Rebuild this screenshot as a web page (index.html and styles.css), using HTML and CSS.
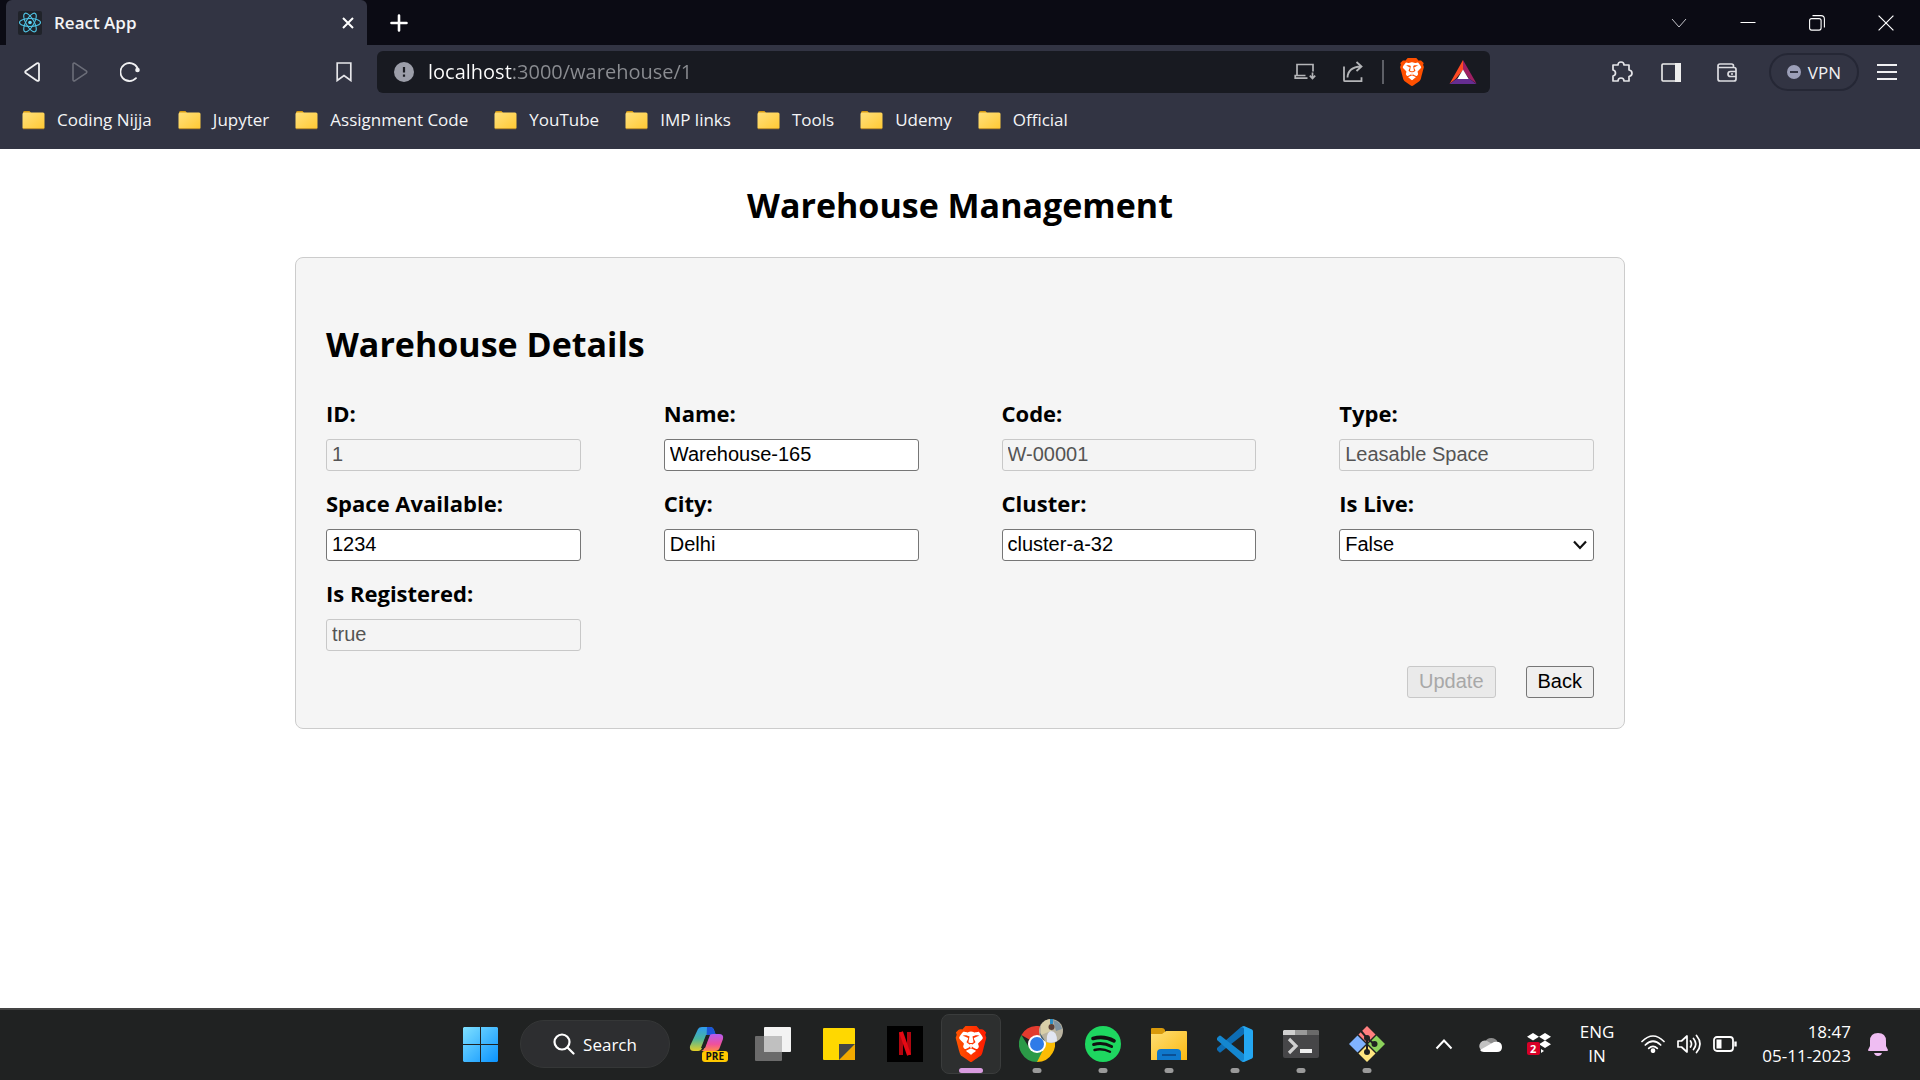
FILE: index.html
```html
<!DOCTYPE html>
<html lang="en">
<head>
<meta charset="utf-8">
<title>React App</title>
<link rel="stylesheet" href="styles.css">
</head>
<body>
<svg class="defs" aria-hidden="true">
  <defs>
    <linearGradient id="g-folder" x1="0" y1="0" x2="1" y2="1"><stop offset="0" stop-color="#ffe07c"/><stop offset="1" stop-color="#ffc933"/></linearGradient>
    <linearGradient id="g-brave" x1="0" x2="1"><stop offset="0" stop-color="#ff5500"/><stop offset="1" stop-color="#ff1a00"/></linearGradient>
    <linearGradient id="g-win" x1="0" y1="0" x2="1" y2="1"><stop offset="0" stop-color="#7fe0ff"/><stop offset="1" stop-color="#0a93ff"/></linearGradient>
    <linearGradient id="g-coA" x1="0" y1="0" x2="0" y2="1"><stop offset="0" stop-color="#2e9bf0"/><stop offset=".5" stop-color="#4bb59b"/><stop offset="1" stop-color="#e3cf26"/></linearGradient>
    <linearGradient id="g-coB" x1="0" y1="0" x2="0" y2="1"><stop offset="0" stop-color="#b45cf0"/><stop offset=".6" stop-color="#f0509c"/><stop offset="1" stop-color="#ff8a4c"/></linearGradient>
    <linearGradient id="g-exp" x1="0" y1="0" x2="1" y2="1"><stop offset="0" stop-color="#ffdf75"/><stop offset="1" stop-color="#fbb911"/></linearGradient>
    <symbol id="folder" viewBox="0 0 23 20">
      <path d="M1 2.500q0-1.500 1.500-1.500h5l2 2.500H1z" fill="#d89b13"/>
      <rect x=".5" y="2.500" width="22" height="16.500" rx="1.500" fill="url(#g-folder)"/>
      <path d="M1 18.700h21" stroke="#b98a2a" stroke-width="1"/>
    </symbol>
    <symbol id="lion" viewBox="0 0 24 24">
      <path d="M12 3.200 18.500 3l2 5-3 8-5.500 4-5.500-4-3-8 2-5z" fill="#fff"/>
      <path d="M15.680 0l2.096 2.380s1.840-.512 2.709.358c.868.870 1.584 1.638 1.584 1.638l-.562 1.381.715 2.047s-2.104 7.980-2.350 8.955c-.486 1.919-.818 2.660-2.198 3.633-1.380.972-3.884 2.660-4.293 2.916-.409.256-.920.692-1.380.692-.460 0-.970-.436-1.380-.692a185.796 185.796 0 01-4.293-2.916c-1.380-.973-1.712-1.714-2.197-3.633-.247-.975-2.351-8.955-2.351-8.955l.715-2.047-.562-1.381s.716-.768 1.585-1.638c.868-.870 2.708-.358 2.708-.358L8.321 0h7.360zm-3.679 14.936c-.140 0-1.038.317-1.758.690-.720.373-1.242.637-1.409.742-.167.104-.065.301.087.409.152.107 2.194 1.690 2.393 1.866.198.175.489.464.687.464.198 0 .490-.290.688-.464.198-.175 2.240-1.759 2.392-1.866.152-.108.254-.305.087-.410-.167-.104-.689-.368-1.410-.741-.720-.373-1.617-.690-1.757-.690zm0-11.278s-.409.001-1.022.206-1.278.460-1.584.460c-.307 0-2.581-.434-2.581-.434S4.119 7.152 4.119 7.849c0 .697.339.881.680 1.243l2.020 2.149c.192.203.590.511.356 1.066-.235.555-.580 1.260-.196 1.977.384.716 1.042 1.194 1.464 1.115.421-.080 1.412-.598 1.776-.834.364-.237 1.518-1.190 1.518-1.554 0-.365-1.193-1.020-1.413-1.168-.220-.150-1.226-.725-1.247-.950-.020-.227-.012-.293.284-.851.297-.559.831-1.304.742-1.800-.089-.495-.950-.753-1.565-.986-.615-.232-1.799-.671-1.947-.740-.148-.068-.110-.133.339-.175.448-.043 1.719-.212 2.292-.052.573.160 1.552.403 1.632.532.079.130.149.134.067.579-.081.445-.500 2.581-.541 2.960-.040.380-.120.630.288.724.409.094 1.097.256 1.333.256s.924-.162 1.333-.256c.408-.093.329-.344.288-.723-.040-.380-.460-2.516-.541-2.961-.082-.445-.012-.450.067-.579.080-.129 1.059-.372 1.632-.532.573-.160 1.845.009 2.292.052.449.042.487.107.339.175-.148.069-1.332.508-1.947.740-.615.233-1.476.490-1.565.986-.090.496.445 1.241.742 1.800.297.558.304.624.284.850-.020.226-1.026.802-1.247.950-.220.150-1.413.804-1.413 1.169 0 .364 1.154 1.317 1.518 1.554.364.236 1.355.755 1.776.834.422.079 1.080-.400 1.464-1.115.384-.716.039-1.422-.195-1.977-.235-.555.163-.863.355-1.066l2.020-2.149c.341-.362.680-.546.680-1.243 0-.697-2.695-3.960-2.695-3.960s-2.274.436-2.580.436c-.307 0-.972-.256-1.585-.461-.613-.205-1.022-.206-1.022-.206z"/>
      <path d="M12 14.500v-2.500" stroke="#fff" stroke-width="1.200"/>
    </symbol>
  </defs>
</svg>

<header class="browser">
  <div class="tabs">
    <div class="tab">
      <svg class="favicon" viewBox="0 0 24 24" fill="none" stroke="#4fc3e4" stroke-width="1.100"><rect width="24" height="24" rx="2" fill="#20232a" stroke="none"/><ellipse cx="12" cy="11.500" rx="10.500" ry="4"/><ellipse cx="12" cy="11.500" rx="10.500" ry="4" transform="rotate(60 12 11.500)"/><ellipse cx="12" cy="11.500" rx="10.500" ry="4" transform="rotate(120 12 11.500)"/><circle cx="12" cy="11.500" r="1.800" fill="#61dafb" stroke="none"/></svg>
      <span class="tab-title">React App</span>
      <button class="icon-btn" aria-label="Close tab"><svg width="12" height="12" viewBox="0 0 12 12" stroke="#fff" stroke-width="2"><path d="M1 1l10 10M11 1L1 11"/></svg></button>
    </div>
    <button class="icon-btn new-tab" aria-label="New tab"><svg width="18" height="18" viewBox="0 0 18 18" stroke="#fff" stroke-width="2.600" stroke-linecap="round"><path d="M9 1.500v15M1.500 9h15"/></svg></button>
    <div class="window-controls">
      <button class="icon-btn" aria-label="Search tabs"><svg width="16" height="16" viewBox="0 0 16 16" fill="none" stroke="#c4c4ca"><path d="M1 4l7 8 7-8"/></svg></button>
      <button class="icon-btn" aria-label="Minimize"><svg width="16" height="16" viewBox="0 0 16 16" stroke="#fff"><path d="M.5 7.500h15"/></svg></button>
      <button class="icon-btn" aria-label="Restore"><svg width="16" height="16" viewBox="0 0 16 16" fill="none" stroke="#fff" stroke-width="1.100"><rect x=".6" y="3.600" width="11.500" height="11.500" rx="2"/><path d="M3.500.6h8.500q3.400 0 3.400 3.400v8.500"/></svg></button>
      <button class="icon-btn" aria-label="Close"><svg width="16" height="16" viewBox="0 0 16 16" stroke="#fff" stroke-width="1.200"><path d="M.6.6l14.800 14.800M15.400.6L.6 15.400"/></svg></button>
    </div>
  </div>

  <div class="toolbar">
    <div class="nav">
      <button class="icon-btn" aria-label="Back"><svg width="16" height="20" viewBox="0 0 16 20" fill="none" stroke="#f0f0f2" stroke-width="1.800" stroke-linejoin="round"><path d="M13 1.300 1.800 8.900q-1.200 1.100 0 2.200L13 18.700q2 .6 2-1V2.300q0-1.600-2-1z"/></svg></button>
      <button class="icon-btn" aria-label="Forward"><svg width="16" height="20" viewBox="0 0 16 20" fill="none" stroke="#6b6d78" stroke-width="1.600" stroke-linejoin="round"><path d="M3 1.300 14.200 8.900q1.200 1.100 0 2.200L3 18.700q-2 .6-2-1V2.300q0-1.600 2-1z"/></svg></button>
      <button class="icon-btn" aria-label="Reload"><svg width="20" height="20" viewBox="1 0 20 20" fill="none" stroke="#f0f0f2" stroke-width="1.800" stroke-linecap="round"><path d="M18.500 6A9 9 0 1 0 17 16.200"/><circle cx="18.500" cy="8" r="2.300" fill="#f0f0f2" stroke="none"/></svg></button>
      <button class="icon-btn mark" aria-label="Bookmark"><svg width="16" height="20" viewBox="0 0 16 20" fill="none" stroke="#e6e6ea" stroke-width="1.700"><path d="M1.200 1h13.600v17.500L8 13.500l-6.800 5z"/></svg></button>
    </div>
    <form class="address">
      <svg width="20" height="20" viewBox="0 0 20 20"><circle cx="10" cy="10" r="10" fill="#9c9ea9"/><path d="M10 5v5.500M10 12.500v2.200" stroke="#1a1c22" stroke-width="2.200"/></svg>
      <input class="url" type="text" aria-label="Address" value="localhost:3000/warehouse/1">
      <button type="button" class="icon-btn" aria-label="Install app"><svg width="22" height="18" viewBox="0 0 22 18" fill="none" stroke="#b4b5b8" stroke-width="1.700"><path d="M19 8.500V1.500H3v11M11.500 12.500H1.200v2.700h12.300M18.500 9.500v6M15.800 12.700l2.700 2.900 2.700-2.900"/></svg></button>
      <button type="button" class="icon-btn share" aria-label="Share"><svg width="22" height="22" viewBox="0 0 22 22" fill="none" stroke="#b4b5b8" stroke-width="1.800"><path d="M2 5.500v13.700q0 1 1 1h16.500v-4M5.500 16.500q.5-10.500 13.500-11M14.500 1l5 4.500-5 4.500"/></svg></button>
      <span class="divider"></span>
      <button type="button" class="icon-btn" aria-label="Brave Shields"><svg width="28" height="28" fill="#ff5000"><use href="#lion"/></svg></button>
      <button type="button" class="icon-btn bat" aria-label="Brave Rewards"><svg width="28" height="24" viewBox="0 0 28 24"><path d="M14 0v10L7 18.500.5 24z" fill="#ff4a24"/><path d="M14 0v10l6 8.500 7.500 5z" fill="#9e1f63"/><path d="M.5 24 8 18.500h12l7.500 5.500z" fill="#662d91"/><path d="M14 9.500l5.700 9.500H8.300z" fill="#fff"/></svg></button>
    </form>
    <div class="tools">
      <button class="icon-btn" aria-label="Extensions"><svg width="22" height="22" viewBox="0 0 22 22" fill="none" stroke="#e4e4e8" stroke-width="1.700" stroke-linejoin="round"><path d="M2 4h5q0-3 3-3t3 3h5v5q3 .5 3 3.200T18 15.500V20h-5q0-3-3-3t-3 3H2v-5q2.500-.5 2.500-3T2 9z"/></svg></button>
      <button class="icon-btn" aria-label="Sidebar"><svg width="20" height="19" viewBox="0 0 20 19"><rect x="1" y="1" width="18" height="17" rx="1" fill="none" stroke="#eee" stroke-width="1.600"/><path d="M14 0h6v19h-6z" fill="#eee"/></svg></button>
      <button class="icon-btn wallet" aria-label="Wallet"><svg width="20" height="19" viewBox="0 0 20 19" fill="none" stroke="#dddde2" stroke-width="1.700"><path d="M1 4.500V16q0 2 2 2h14q2 0 2-2V6.500q0-2-2-2H1.500M1 5V3q0-2 2-2h11.500q2 0 2 2v1M19 8.500h-5.500q-2.500 0-2.500 2.500t2.500 2.500H19M14 11h2"/></svg></button>
      <button class="vpn"><svg width="14" height="14" viewBox="0 0 14 14"><circle cx="7" cy="7" r="7" fill="#9c9fb8"/><path d="M3 7h8" stroke="#323443" stroke-width="2"/></svg>VPN</button>
      <button class="icon-btn" aria-label="Menu"><svg width="20" height="16" viewBox="0 0 20 16" stroke="#f0f0f2" stroke-width="2"><path d="M0 1h20M0 8h20M0 15h20"/></svg></button>
    </div>
  </div>

  <nav class="bookmarks" aria-label="Bookmarks">
    <a href="#"><svg width="23" height="20"><use href="#folder"/></svg>Coding Nijja</a>
    <a href="#"><svg width="23" height="20"><use href="#folder"/></svg>Jupyter</a>
    <a href="#"><svg width="23" height="20"><use href="#folder"/></svg>Assignment Code</a>
    <a href="#"><svg width="23" height="20"><use href="#folder"/></svg>YouTube</a>
    <a href="#"><svg width="23" height="20"><use href="#folder"/></svg>IMP links</a>
    <a href="#"><svg width="23" height="20"><use href="#folder"/></svg>Tools</a>
    <a href="#"><svg width="23" height="20"><use href="#folder"/></svg>Udemy</a>
    <a href="#"><svg width="23" height="20"><use href="#folder"/></svg>Official</a>
  </nav>
</header>

<main class="page">
  <h1 class="heading">Warehouse Management</h1>
  <form class="card">
    <h2 class="heading">Warehouse Details</h2>
    <div class="fields">
      <div class="field"><label for="id">ID:</label><input id="id" type="text" value="1" disabled></div>
      <div class="field"><label for="name">Name:</label><input id="name" type="text" value="Warehouse-165"></div>
      <div class="field"><label for="code">Code:</label><input id="code" type="text" value="W-00001" disabled></div>
      <div class="field"><label for="type">Type:</label><input id="type" type="text" value="Leasable Space" disabled></div>
      <div class="field"><label for="space">Space Available:</label><input id="space" type="text" value="1234"></div>
      <div class="field"><label for="city">City:</label><input id="city" type="text" value="Delhi"></div>
      <div class="field"><label for="cluster">Cluster:</label><input id="cluster" type="text" value="cluster-a-32"></div>
      <div class="field"><label for="live">Is Live:</label>
        <div class="select"><select id="live"><option>False</option><option>True</option></select><svg width="14" height="10" viewBox="0 0 14 10" fill="none" stroke="#111" stroke-width="2.200"><path d="M1 1.500l6 6.500 6-6.500"/></svg></div>
      </div>
      <div class="field"><label for="registered">Is Registered:</label><input id="registered" type="text" value="true" disabled></div>
    </div>
    <div class="actions">
      <button type="button" disabled>Update</button>
      <button type="button">Back</button>
    </div>
  </form>
</main>

<footer class="taskbar">
  <div class="apps">
    <button class="app" aria-label="Start"><svg width="35" height="35" viewBox="0 0 35 35" fill="url(#g-win)"><path d="M1 0h16v17H0V1zM18 0h16l1 1v16H18zM0 18h17v17H1l-1-1zM18 18h17v16l-1 1H18z"/></svg></button>
    <button class="search"><svg width="22" height="22" viewBox="0 0 22 22" fill="none" stroke="#fff" stroke-width="2.200" stroke-linecap="round"><circle cx="9" cy="9" r="7.500"/><path d="M14.500 14.500l6 6"/></svg>Search</button>
    <button class="app" aria-label="Copilot">
      <svg width="36" height="36" viewBox="0 0 36 36"><path d="M9 3q1-2 4-2h8q3 0 4 3l2 6h-7q-3 0-4 3l-3 9q-1 3-4 3H5q-5 0-4-5z" fill="url(#g-coA)"/><path d="M18 1h3q3 0 4 3l2 5h-6q-2 0-3.500 2z" fill="#1c55d8"/><path d="M26 8h4q5 0 4 5l-3 8q-1 4-5 4H12q3-1 4-4l3-9q1-4 5-4z" fill="url(#g-coB)"/><path d="M17 9h4l-5 13h-4z" fill="#202222"/></svg>
      <span class="pre">PRE</span>
    </button>
    <button class="app" aria-label="Task view"><svg width="36" height="36" viewBox="0 0 36 36"><rect x="9" y="1" width="27" height="25" rx="1" fill="#f3f3f3"/><rect x="0" y="10" width="27" height="25" rx="1" fill="#6b6b6b"/><rect x="9" y="10" width="18" height="16" fill="#c0c0c0"/></svg></button>
    <button class="app" aria-label="Sticky Notes"><svg width="32" height="32" viewBox="0 0 32 32"><rect width="32" height="32" rx="1" fill="#ffd800"/><path d="M16 32l16-16v16z" fill="#f2a900"/><path d="M16 16h16L16 32z" fill="#454545"/></svg></button>
    <button class="app" aria-label="Netflix"><svg width="36" height="36" viewBox="0 0 36 36" fill="none"><rect width="36" height="36" fill="#000"/><path d="M14 6v23M22 6v23" stroke="#b1060f" stroke-width="4"/><path d="M14 6l8 23" stroke="#e50914" stroke-width="4"/></svg></button>
    <button class="app active" aria-label="Brave"><svg width="36" height="36" fill="url(#g-brave)"><use href="#lion"/></svg></button>
    <button class="app running" aria-label="Chrome">
      <svg width="36" height="36" viewBox="0 0 36 36"><path d="M18 18 2.400 9A18 18 0 0 1 33.600 9z" fill="#e33b2e"/><path d="M18 18 33.600 9A18 18 0 0 1 18 36z" fill="#fbbc04"/><path d="M18 18v0L25 22 18 36A18 18 0 0 1 2.400 9l8 13z" fill="#2b9a47"/><path d="M18 9.800h15.900L25 22z" fill="#fbbc04"/><circle cx="18" cy="18" r="9" fill="#fff"/><circle cx="18" cy="18" r="7" fill="#2f7be8"/></svg>
      <svg class="avatar" viewBox="0 0 24 24"><circle cx="12" cy="12" r="12" fill="#b9b3a0"/><path d="M2 6q4-6 10-6v12l-10 4z" fill="#d8cfa8"/><path d="M14 1q8 2 9 9l-6 2z" fill="#7f93a0"/><path d="M8 23q-1-10 4-11 6 0 6 10-5 3-10 1z" fill="#e2e6f2"/><circle cx="12.500" cy="8" r="3" fill="#5a4038"/><path d="M11 0h3v5h-3z" fill="#2f8fc4"/><path d="M1 14l5 8q-5-3-5-8z" fill="#3a5a70"/></svg>
    </button>
    <button class="app running" aria-label="Spotify"><svg width="36" height="36" viewBox="0 0 36 36" fill="none" stroke="#111" stroke-linecap="round"><circle cx="18" cy="18" r="18" fill="#1ed760" stroke="none"/><path d="M8 12.500q11-3 21 2.300" stroke-width="3.600"/><path d="M8.600 18.500q9.500-2.500 18 2" stroke-width="3"/><path d="M9.500 24q8-2 15.500 1.800" stroke-width="2.400"/></svg></button>
    <button class="app running" aria-label="File Explorer"><svg width="36" height="34" viewBox="0 0 36 34"><path d="M0 2q0-1 1-1h10q2 0 3 2v5H0z" fill="#d99a0b"/><path d="M0 7h11l4-3h20q1 0 1 1v28H0z" fill="url(#g-exp)"/><path d="M6 33v-7q0-4 4-4h16q4 0 4 4v7z" fill="#0f78cc"/><path d="M11 28h14" stroke="#0b4f94" stroke-width="2"/></svg></button>
    <button class="app running" aria-label="Visual Studio Code"><svg width="36" height="36" viewBox="0 0 36 36"><path d="M27 8 4 26q-1 1-2 0l-2-2q-1-1 0-2L24 1q2-1 3 0z" fill="#0d6db4"/><path d="M27 28 4 10q-1-1-2 0l-2 2q-1 1 0 2l24 21q2 1 3 0z" fill="#1487d0"/><path d="M27 0l8 3.500q1 .5 1 2v25q0 1.500-1 2L27 36q-1.500 0-3-1.500 3 1 3-1.500V3q0-2.500-3-1.500Q25.500 0 27 0z" fill="#24a7f2"/></svg></button>
    <button class="app running" aria-label="Terminal"><svg width="36" height="28" viewBox="0 0 36 28"><rect width="36" height="28" rx="2" fill="#464648"/><path d="M1 0h11v5H0V1z" fill="#d0d0d0"/><path d="M12 0h12v5H12z" fill="#9a9a9a"/><path d="M24 0h11l1 1v4H24z" fill="#6a6a6a"/><path d="M6 9l7 7-7 7" fill="none" stroke="#d0d0d0" stroke-width="3.200"/><rect x="17" y="19" width="12" height="4" fill="#eee"/></svg></button>
    <button class="app running" aria-label="Git Bash"><svg width="36" height="36" viewBox="0 0 36 36"><path d="M18 0l8.500 8.500-8.500 8.500-8.500-8.500z" fill="#ff7f7f"/><path d="M27.500 9.500 36 18l-8.500 8.500L19 18z" fill="#8cd25c"/><path d="M8.500 9.500 17 18l-8.500 8.500L0 18z" fill="#80b3ff"/><path d="M18 19l8.500 8.500L18 36l-8.500-8.500z" fill="#ffe680"/><g fill="none" stroke="#202222" stroke-width="2"><path d="M12 5l6 7v14M18 12l7 6"/></g><g fill="#202222"><circle cx="18" cy="12" r="3"/><circle cx="25.500" cy="18" r="3"/><circle cx="18" cy="26" r="3"/></g></svg></button>
  </div>
  <div class="tray">
    <button class="icon-btn" aria-label="Hidden icons"><svg width="18" height="12" viewBox="0 0 18 12" fill="none" stroke="#fff" stroke-width="2"><path d="M1.500 10.500 9 2.500l7.500 8"/></svg></button>
    <button class="icon-btn" aria-label="OneDrive"><svg width="24" height="16" viewBox="0 0 24 16"><path d="M7 6a7 7 0 0 1 12.500-.5L14 10z" fill="#8d8d8d"/><path d="M6 15.500A5.500 5.500 0 1 1 9 5l9 5-8 5.500z" fill="#c2c2c2"/><path d="M2 14 16 6q8-1 8 5 0 5-5 5H6q-3 0-4-2z" fill="#fff"/></svg></button>
    <button class="icon-btn dropbox" aria-label="Dropbox"><svg width="24" height="22" viewBox="0 0 24 22" fill="#fff"><path d="M6 0l6 3.800L6 7.500 0 3.800zM18 0l6 3.800-6 3.700-6-3.700zM18 7.500l6 3.700-6 3.800-6-3.800zM14 16l3 2-3 2z"/></svg><span class="count">2</span></button>
    <button class="lang">ENG<br>IN</button>
    <button class="quick" aria-label="Network, volume, battery">
      <svg width="24" height="18" viewBox="0 0 24 18" fill="none" stroke="#fff" stroke-width="1.700" stroke-linecap="round"><path d="M1 6.500q11-11 22 0M4.300 10q7.700-7.500 15.400 0M7.700 13.300q4.300-4 8.600 0"/><circle cx="12" cy="15.700" r="1.500" fill="#fff"/></svg>
      <svg width="24" height="20" viewBox="0 0 24 20" fill="none" stroke="#fff" stroke-width="1.700" stroke-linecap="round" stroke-linejoin="round"><path d="M1 7h3.500L10 2v16l-5.500-5H1zM13.500 7q2 3 0 6M16.500 4.500q4.500 5.500 0 11M19.500 1.500q7 8.500 0 17"/></svg>
      <svg width="24" height="16" viewBox="0 0 24 16" fill="none" stroke="#fff" stroke-width="1.800"><rect x="1" y="1" width="19" height="14" rx="3"/><path d="M3.500 3.500h5v9h-5z" fill="#fff" stroke="none"/><path d="M22.500 5.500v5" stroke-width="2.400"/></svg>
    </button>
    <button class="clock">18:47<br>05-11-2023</button>
    <button class="icon-btn" aria-label="Notifications"><svg width="20" height="23" viewBox="0 0 20 23" fill="#efbdf2"><path d="M10 0q8 0 8 8v5l2 4q0 1-1 1H1q-1 0-1-1l2-4V8q0-8 8-8zM6 20h8q-1 3-4 3t-4-3z"/></svg></button>
  </div>
</footer>
</body>
</html>
```
FILE: styles.css
```css
* { box-sizing: border-box; }

body {
  margin: 0;
  min-height: 100vh;
  display: flex;
  flex-direction: column;
  background: #fff;
  color: #000;
  font-family: "Open Sans", "Noto Sans", sans-serif;
}

svg { display: block; flex: none; }
.defs { position: absolute; width: 0; height: 0; }

button { font-family: inherit; }

.icon-btn {
  display: flex;
  align-items: center;
  justify-content: center;
  padding: 0;
  border: 0;
  background: none;
}

/* Browser chrome */
.browser { background: #323443; color: #f4f4f6; }

.tabs {
  display: flex;
  align-items: stretch;
  height: 45px;
  padding-left: 6px;
  background: #0b0b14;
}

.tab {
  display: flex;
  align-items: center;
  gap: 12px;
  width: 361px;
  padding: 0 13px 0 12px;
  border-radius: 6px 6px 0 0;
  background: #323443;
}
.favicon { width: 24px; height: 24px; }
.tab-title { flex: 1; font-size: 17px; font-weight: 600; }

.new-tab { margin-left: 23px; }

.window-controls { display: flex; margin-left: auto; }
.window-controls .icon-btn { width: 69px; }

.toolbar {
  display: flex;
  align-items: center;
  height: 54px;
  padding-right: 23px;
}

.nav {
  display: flex;
  align-items: center;
  gap: 32px;
  width: 377px;
  padding: 0 25px 0 24px;
}
.mark { margin-left: auto; }

.address {
  display: flex;
  align-items: center;
  flex: 1;
  height: 42px;
  padding: 0 13px 0 17px;
  border-radius: 6px;
  background: #181a21;
}
.url {
  flex: 1;
  min-width: 0;
  margin: 0 14px;
  padding: 0;
  border: 0;
  outline: 0;
  font: 20px/28px "Open Sans", "Noto Sans", sans-serif;
  color: transparent;
  background: linear-gradient(to right, #fff 84px, #8b8d92 84px);
  -webkit-background-clip: text;
  background-clip: text;
}
.share { margin-left: 26px; }
.divider { width: 2px; height: 24px; margin: 0 14px 0 18px; background: #5d5f66; }
.bat { margin-left: 23px; }

.tools {
  display: flex;
  align-items: center;
  gap: 28px;
  margin-left: 121px;
}
.wallet { margin: 0 4px 0 8px; }
.vpn {
  display: flex;
  align-items: center;
  gap: 7px;
  height: 38px;
  margin-right: -10px;
  padding: 0 16px;
  border: 2px solid #252735;
  border-radius: 19px;
  background: none;
  color: #f0f0f2;
  font-size: 17px;
}

.bookmarks {
  display: flex;
  align-items: center;
  gap: 26px;
  height: 50px;
  padding: 0 22px 8px;
}
.bookmarks a {
  display: flex;
  align-items: center;
  gap: 12px;
  color: #f4f4f6;
  font-size: 17px;
  line-height: 24px;
  text-decoration: none;
}

/* Warehouse page */
.page { flex: 1; padding: 0 24px; }

.heading {
  margin: 32px 0 28px;
  font-size: 34px;
  line-height: 48px;
  font-weight: 700;
}
h1.heading { text-align: center; }

.card {
  max-width: 1330px;
  margin: 0 auto;
  padding: 30px;
  border: 1px solid #ccc;
  border-radius: 8px;
  background: #f5f5f5;
}

.fields {
  display: grid;
  grid-template-columns: repeat(4, 1fr);
  gap: 15px 83px;
}
.field { display: flex; flex-direction: column; gap: 8px; }
.field label { font-size: 22px; line-height: 35px; font-weight: 700; }

.field input,
.field select {
  width: 100%;
  height: 32px;
  padding: 0 5px 2px;
  border: 1px solid #767676;
  border-radius: 3px;
  background: #fff;
  color: #000;
  font: 20px "Liberation Sans", Arial, sans-serif;
}
.field input:disabled {
  border-color: #c8c8c8;
  background: #f4f4f4;
  color: #545454;
}
.select { display: grid; align-items: center; }
.select select,
.select svg { grid-area: 1 / 1; }
.select select { appearance: none; }
.select svg { justify-self: end; margin-right: 7px; pointer-events: none; }

.actions {
  display: flex;
  justify-content: flex-end;
  gap: 30px;
  margin-top: 15px;
}
.actions button {
  height: 32px;
  padding: 0 11px 2px;
  border: 1px solid #767676;
  border-radius: 3px;
  background: #efefef;
  color: #000;
  font: 20px "Liberation Sans", Arial, sans-serif;
}
.actions button:disabled {
  border-color: #c8c8c8;
  background: #eaeaea;
  color: #a8a8a8;
}

/* Taskbar */
.taskbar {
  display: flex;
  justify-content: flex-end;
  height: 72px;
  border-top: 2px solid #444;
  background: #202222;
  color: #fff;
}

.apps { display: flex; align-items: center; padding-bottom: 2px; }

.app {
  position: relative;
  display: flex;
  align-items: center;
  justify-content: center;
  width: 60px;
  height: 60px;
  margin: 0 3px;
  padding: 0;
  border: 1px solid transparent;
  border-radius: 8px;
  background: none;
}
.app.active { border-color: #3a3c3c; background: #2d2f2f; }
.app.active::after,
.app.running::after {
  content: "";
  position: absolute;
  bottom: 0;
  left: 50%;
  width: 9px;
  height: 5px;
  border-radius: 3px;
  background: #9a9a9a;
  translate: -50% 0;
}
.app.active::after { width: 24px; background: #d99ce0; }

.search {
  display: flex;
  align-items: center;
  justify-content: center;
  gap: 8px;
  width: 150px;
  height: 48px;
  margin: 0 4px 0 7px;
  padding: 0;
  border: 1px solid #353737;
  border-radius: 24px;
  background: #2d2e30;
  color: #fff;
  font-size: 17px;
}

.pre {
  position: absolute;
  right: 8px;
  bottom: 11px;
  padding: 0 4px;
  border-radius: 3px;
  background: #ffc800;
  color: #111;
  font-size: 10px;
  line-height: 11px;
  font-weight: 700;
}
.avatar { position: absolute; top: 4px; right: 3px; width: 24px; height: 24px; }

.tray {
  display: flex;
  align-items: center;
  justify-content: flex-end;
  width: 520px;
  padding: 0 32px 2px 0;
}
.tray .icon-btn { margin-left: 25px; }
.tray .dropbox { position: relative; }
.count {
  position: absolute;
  left: 0;
  top: 9px;
  width: 13px;
  border-radius: 2px;
  background: #d80027;
  color: #fff;
  font-size: 11px;
  line-height: 13px;
  font-weight: 700;
}
.lang,
.clock {
  padding: 0;
  border: 0;
  background: none;
  color: #fff;
  font-size: 17px;
  line-height: 24px;
}
.lang { margin-left: 29px; }
.quick {
  display: flex;
  align-items: center;
  gap: 12px;
  margin-left: 27px;
  padding: 0;
  border: 0;
  background: none;
}
.clock { margin-left: 25px; text-align: right; }
.tray .clock + .icon-btn { margin-left: 17px; }
```
